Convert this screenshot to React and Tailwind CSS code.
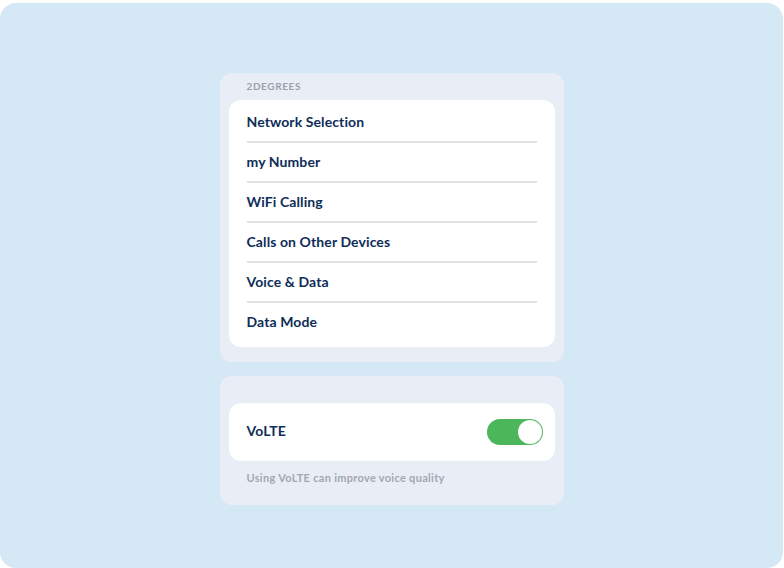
import React, { useState } from "react";

const rows = [
  "Network Selection",
  "my Number",
  "WiFi Calling",
  "Calls on Other Devices",
  "Voice & Data",
  "Data Mode",
];

const Toggle = ({ on, onChange }) => (
  <button
    onClick={() => onChange(!on)}
    className={`w-[56px] h-[26px] rounded-full p-[1px] flex items-center ${
      on ? "bg-[#4bb65a] justify-end" : "bg-[#d1d5db] justify-start"
    }`}
  >
    <span className="w-[24px] h-[24px] rounded-full bg-white block"></span>
  </button>
);

const App = () => {
  const [volte, setVolte] = useState(true);

  return (
    <div
      className="w-[784px] h-[568px] bg-white pt-[3px] pr-[1px]"
      style={{ fontFamily: "Lato, 'Noto Sans', sans-serif" }}
    >
      <div className="h-full rounded-[16px] bg-[#d4e8f6] pt-[70px] flex flex-col items-center gap-[14px]">
        {/* network list */}
        <div className="w-[344px] rounded-[12px] bg-[#e9eef6] px-[9px] pb-[15px]">
          <div className="h-[27px] flex items-center pl-[18px] text-[10px] font-bold tracking-[0.6px] text-[#9aa0a8]">
            2DEGREES
          </div>
          <div className="bg-white rounded-[12px] px-[18px] pt-[3px] pb-[6px]">
            {rows.map((r, i) => (
              <div key={r}>
                {i > 0 && <div className="h-[2px] bg-[#dfe1e4]"></div>}
                <div className="h-[38px] pb-[2px] flex items-center text-[14px] font-bold tracking-[0.1px] text-[#0e2d58]">
                  {r}
                </div>
              </div>
            ))}
          </div>
        </div>

        {/* volte */}
        <div className="w-[344px] rounded-[12px] bg-[#e9eef6] px-[9px] pt-[27px] pb-[10px]">
          <div className="bg-white rounded-[12px] h-[58px] pl-[18px] pr-[12px] flex items-center justify-between">
            <span className="text-[14px] font-bold tracking-[0.1px] text-[#0e2d58] pb-[3px]">VoLTE</span>
            <Toggle on={volte} onChange={setVolte} />
          </div>
          <div className="h-[34px] flex items-center pl-[18px] text-[11px] font-bold tracking-[0.3px] text-[#a3a8ae]">
            Using VoLTE can improve voice quality
          </div>
        </div>
      </div>
    </div>
  );
};

export default App;
